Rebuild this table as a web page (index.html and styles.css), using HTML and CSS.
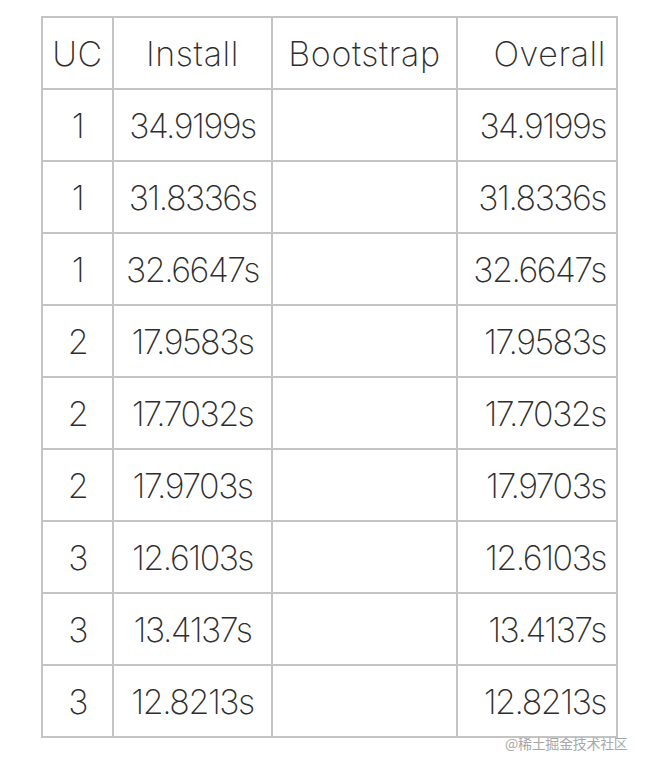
FILE: index.html
```html
<!DOCTYPE html>
<html>
<head>
<meta charset="utf-8">
<link rel="stylesheet" href="styles.css">
</head>
<body>
<div class="page">
  <div class="grid">
    <div class="cell c head">UC</div><div class="cell c head">Install</div><div class="cell c head">Bootstrap</div><div class="cell r head">Overall</div>
    <div class="cell c">1</div><div class="cell c">34.9199s</div><div class="cell c"></div><div class="cell r">34.9199s</div>
    <div class="cell c">1</div><div class="cell c">31.8336s</div><div class="cell c"></div><div class="cell r">31.8336s</div>
    <div class="cell c">1</div><div class="cell c">32.6647s</div><div class="cell c"></div><div class="cell r">32.6647s</div>
    <div class="cell c">2</div><div class="cell c">17.9583s</div><div class="cell c"></div><div class="cell r">17.9583s</div>
    <div class="cell c">2</div><div class="cell c">17.7032s</div><div class="cell c"></div><div class="cell r">17.7032s</div>
    <div class="cell c">2</div><div class="cell c">17.9703s</div><div class="cell c"></div><div class="cell r">17.9703s</div>
    <div class="cell c">3</div><div class="cell c">12.6103s</div><div class="cell c"></div><div class="cell r">12.6103s</div>
    <div class="cell c">3</div><div class="cell c">13.4137s</div><div class="cell c"></div><div class="cell r">13.4137s</div>
    <div class="cell c">3</div><div class="cell c">12.8213s</div><div class="cell c"></div><div class="cell r">12.8213s</div>
  </div>
  <div class="watermark">@稀土掘金技术社区</div>
</div>
</body>
</html>
```
FILE: styles.css
```css
html, body {
  margin: 0;
  padding: 0;
  background: #ffffff;
}
.page {
  position: relative;
  width: 646px;
  height: 770px;
  padding-top: 16px;
  padding-left: 41px;
  box-sizing: border-box;
}
.grid {
  display: grid;
  grid-template-columns: 71px 159px 185px 160px;
  grid-auto-rows: 72px;
  width: max-content;
  border-left: 2px solid #c4c4c4;
  border-top: 2px solid #c4c4c4;
}
.cell {
  box-sizing: border-box;
  border-right: 2px solid #c4c4c4;
  border-bottom: 2px solid #c4c4c4;
  display: flex;
  align-items: center;
  padding: 0 10px;
  font-family: Inter, "Noto Sans", sans-serif;
  font-weight: 250;
  font-size: 34px;
  letter-spacing: -1.5px;
  color: #2e2e2e;
  white-space: nowrap;
}
.head {
  letter-spacing: 0.6px;
}
.c { justify-content: center; }
.r { justify-content: flex-end; }
.watermark {
  position: absolute;
  left: 505px;
  top: 733px;
  font-family: "Noto Sans CJK SC", sans-serif;
  font-size: 14px;
  color: #a8a8a8;
  letter-spacing: -0.3px;
}
```
